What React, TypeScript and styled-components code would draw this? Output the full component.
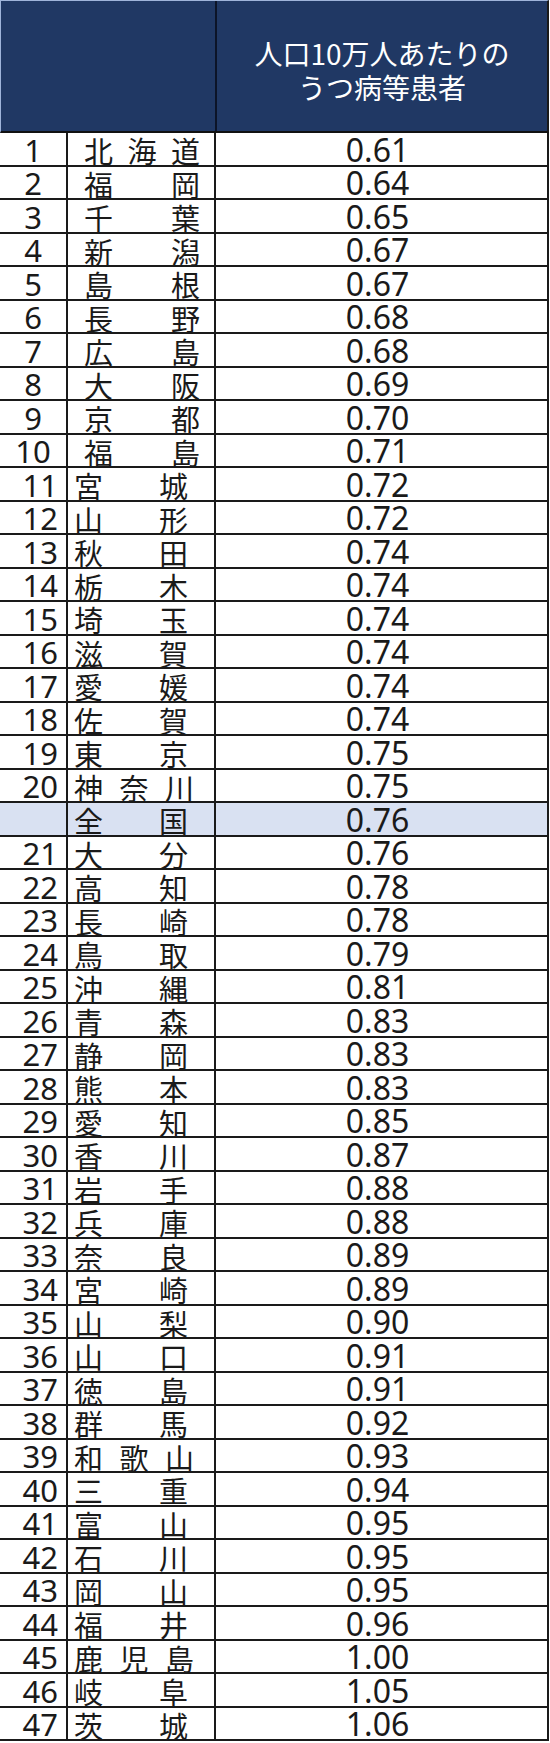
import styled, { createGlobalStyle } from 'styled-components';

const GlobalStyle = createGlobalStyle`
  html, body {
    margin: 0;
    padding: 0;
    background: #ffffff;
  }
  body {
    font-family: 'Noto Sans', 'Noto Sans CJK JP', sans-serif;
    color: #1a1a1a;
  }
`;

type Row = { rank?: number; name: string; value: string; national?: boolean };

const rows: Row[] = [
  { rank: 1, name: '北海道', value: '0.61' },
  { rank: 2, name: '福岡', value: '0.64' },
  { rank: 3, name: '千葉', value: '0.65' },
  { rank: 4, name: '新潟', value: '0.67' },
  { rank: 5, name: '島根', value: '0.67' },
  { rank: 6, name: '長野', value: '0.68' },
  { rank: 7, name: '広島', value: '0.68' },
  { rank: 8, name: '大阪', value: '0.69' },
  { rank: 9, name: '京都', value: '0.70' },
  { rank: 10, name: '福島', value: '0.71' },
  { rank: 11, name: '宮城', value: '0.72' },
  { rank: 12, name: '山形', value: '0.72' },
  { rank: 13, name: '秋田', value: '0.74' },
  { rank: 14, name: '栃木', value: '0.74' },
  { rank: 15, name: '埼玉', value: '0.74' },
  { rank: 16, name: '滋賀', value: '0.74' },
  { rank: 17, name: '愛媛', value: '0.74' },
  { rank: 18, name: '佐賀', value: '0.74' },
  { rank: 19, name: '東京', value: '0.75' },
  { rank: 20, name: '神奈川', value: '0.75' },
  { name: '全国', value: '0.76', national: true },
  { rank: 21, name: '大分', value: '0.76' },
  { rank: 22, name: '高知', value: '0.78' },
  { rank: 23, name: '長崎', value: '0.78' },
  { rank: 24, name: '鳥取', value: '0.79' },
  { rank: 25, name: '沖縄', value: '0.81' },
  { rank: 26, name: '青森', value: '0.83' },
  { rank: 27, name: '静岡', value: '0.83' },
  { rank: 28, name: '熊本', value: '0.83' },
  { rank: 29, name: '愛知', value: '0.85' },
  { rank: 30, name: '香川', value: '0.87' },
  { rank: 31, name: '岩手', value: '0.88' },
  { rank: 32, name: '兵庫', value: '0.88' },
  { rank: 33, name: '奈良', value: '0.89' },
  { rank: 34, name: '宮崎', value: '0.89' },
  { rank: 35, name: '山梨', value: '0.90' },
  { rank: 36, name: '山口', value: '0.91' },
  { rank: 37, name: '徳島', value: '0.91' },
  { rank: 38, name: '群馬', value: '0.92' },
  { rank: 39, name: '和歌山', value: '0.93' },
  { rank: 40, name: '三重', value: '0.94' },
  { rank: 41, name: '富山', value: '0.95' },
  { rank: 42, name: '石川', value: '0.95' },
  { rank: 43, name: '岡山', value: '0.95' },
  { rank: 44, name: '福井', value: '0.96' },
  { rank: 45, name: '鹿児島', value: '1.00' },
  { rank: 46, name: '岐阜', value: '1.05' },
  { rank: 47, name: '茨城', value: '1.06' },
];

const Table = styled.div`
  width: 549px;
  display: flex;
  flex-direction: column;
`;

const Header = styled.div`
  display: grid;
  grid-template-columns: 216px 1fr;
  height: 133px;
  box-sizing: border-box;
  background: #203864;
  border-top: 1px solid #9fb4da;
  border-left: 1px solid #9fb4da;
  border-right: 2px solid #1a1a1a;
  border-bottom: 2px solid #111;
`;

const HeaderBlank = styled.div`
  border-right: 2px solid #0c1428;
`;

const HeaderTitle = styled.div`
  display: flex;
  flex-direction: column;
  align-items: center;
  justify-content: center;
  padding-top: 8px;
  color: #ffffff;
  font-family: 'Noto Sans CJK JP', sans-serif;
  font-size: 28px;
  line-height: 34px;
  text-align: center;
`;

const BodyRow = styled.div<{ $national?: boolean }>`
  display: grid;
  grid-template-columns: 68px 148px 1fr;
  height: 33.5px;
  box-sizing: border-box;
  background: ${(p) => (p.$national ? '#d9e1f2' : '#ffffff')};
  border-bottom: 2px solid #1a1a1a;
  border-right: 2px solid #1a1a1a;
`;

const RankCell = styled.div<{ $centered: boolean }>`
  display: flex;
  align-items: center;
  justify-content: ${(p) => (p.$centered ? 'center' : 'flex-end')};
  padding: ${(p) => (p.$centered ? '2px 0 0' : '2px 8px 0 0')};
  border-right: 2px solid #1a1a1a;
  font-size: 31px;
  line-height: 26px;
`;

const NameCell = styled.div<{ $wide: boolean; $three: boolean }>`
  display: flex;
  align-items: center;
  justify-content: space-between;
  padding-top: 3px;
  padding-left: ${(p) => (p.$wide ? '16px' : '6px')};
  padding-right: ${(p) => (p.$wide ? '14px' : p.$three ? '20px' : '26px')};
  border-right: 2px solid #1a1a1a;
  font-family: 'Noto Sans CJK JP', sans-serif;
  font-size: 29px;
  line-height: 26px;
`;

const ValueCell = styled.div`
  display: flex;
  align-items: center;
  justify-content: center;
  padding: 2px 8px 0 0;
  font-size: 32px;
  line-height: 26px;
`;

export default function App() {
  return (
    <>
      <GlobalStyle />
      <Table>
        <Header>
          <HeaderBlank />
          <HeaderTitle>
            <span>人口10万人あたりの</span>
            <span>うつ病等患者</span>
          </HeaderTitle>
        </Header>
        {rows.map((row) => {
          const wide = row.rank !== undefined && row.rank <= 10;
          return (
            <BodyRow key={row.name} $national={row.national}>
              <RankCell $centered={wide}>{row.rank ?? ''}</RankCell>
              <NameCell $wide={wide} $three={row.name.length === 3}>
                {row.name.split('').map((ch, i) => (
                  <span key={i}>{ch}</span>
                ))}
              </NameCell>
              <ValueCell>{row.value}</ValueCell>
            </BodyRow>
          );
        })}
      </Table>
    </>
  );
}
